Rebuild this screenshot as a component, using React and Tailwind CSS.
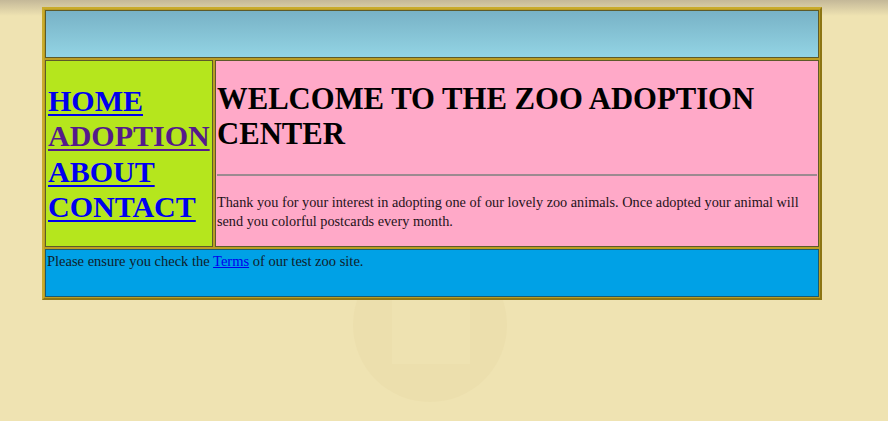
const serif = "font-['Liberation_Serif','Times_New_Roman',serif]";

function NavLink({ children, visited }) {
  return (
    <a
      href="#"
      className={
        "block underline decoration-[2px] underline-offset-[3px] " +
        (visited ? "text-[#551a8b]" : "text-[#0000ee]")
      }
    >
      {children}
    </a>
  );
}

export default function App() {
  return (
    <div className={"relative h-[421px] w-[888px] overflow-hidden bg-[#efe3b2] text-black " + serif}>
      {/* screen shading and faint watermark */}
      <div className="absolute inset-x-0 top-0 h-[16px] bg-gradient-to-b from-[#c4b898] to-transparent" />
      <div className="absolute left-[353px] top-[248px] w-[154px] h-[154px] rounded-full bg-[#ecdfad]">
        <div className="ml-[39px] mt-[37px] w-[78px] h-[79px] bg-[#eee2b1]" />
      </div>

      <div className="relative pt-[7px] pl-[42px]">
        <div className="w-[780px] h-[293px] border-2 border-t-[#c9ab2c] border-l-[#c9ab2c] border-b-[#8c7514] border-r-[#8c7514] bg-[#bb9d22] p-[1px] flex flex-col gap-[2px]">
          <div className="h-[48px] border border-[#5d5a2a] bg-gradient-to-b from-[#78b2c6] to-[#93d4e4]" />

          <div className="h-[187px] flex gap-[2px]">
            <div className="w-[168px] border border-[#5d5a2a] bg-[#b5e61d] flex flex-col justify-center pl-[2px] text-[30px] font-bold leading-[35.5px]">
              <NavLink>HOME</NavLink>
              <NavLink visited>ADOPTION</NavLink>
              <NavLink>ABOUT</NavLink>
              <NavLink>CONTACT</NavLink>
            </div>

            <div className="flex-1 border border-[#5d5a2a] bg-[#ffa9c8] flex flex-col justify-center px-[1px] pt-[5px]">
              <h1 className="text-[30.7px] font-bold leading-[35px]">
                WELCOME TO THE ZOO ADOPTION CENTER
              </h1>
              <hr className="mt-[22px] mb-[17px] border-t-2 border-[#9c8a90]" />
              <p className="text-[14.25px] leading-[19px] text-[#1e1218] pr-[10px]">
                Thank you for your interest in adopting one of our lovely zoo animals. Once adopted your animal will
                send you colorful postcards every month.
              </p>
            </div>
          </div>

          <div className="h-[48px] border border-[#1c5a6e] bg-[#00a1e6] px-[1px] pt-[2px] text-[14.5px] leading-[19px] text-[#10202a]">
            Please ensure you check the{" "}
            <a href="#" className="text-[#0000ee] underline">Terms</a> of our test zoo site.
          </div>
        </div>
      </div>
    </div>
  );
}
